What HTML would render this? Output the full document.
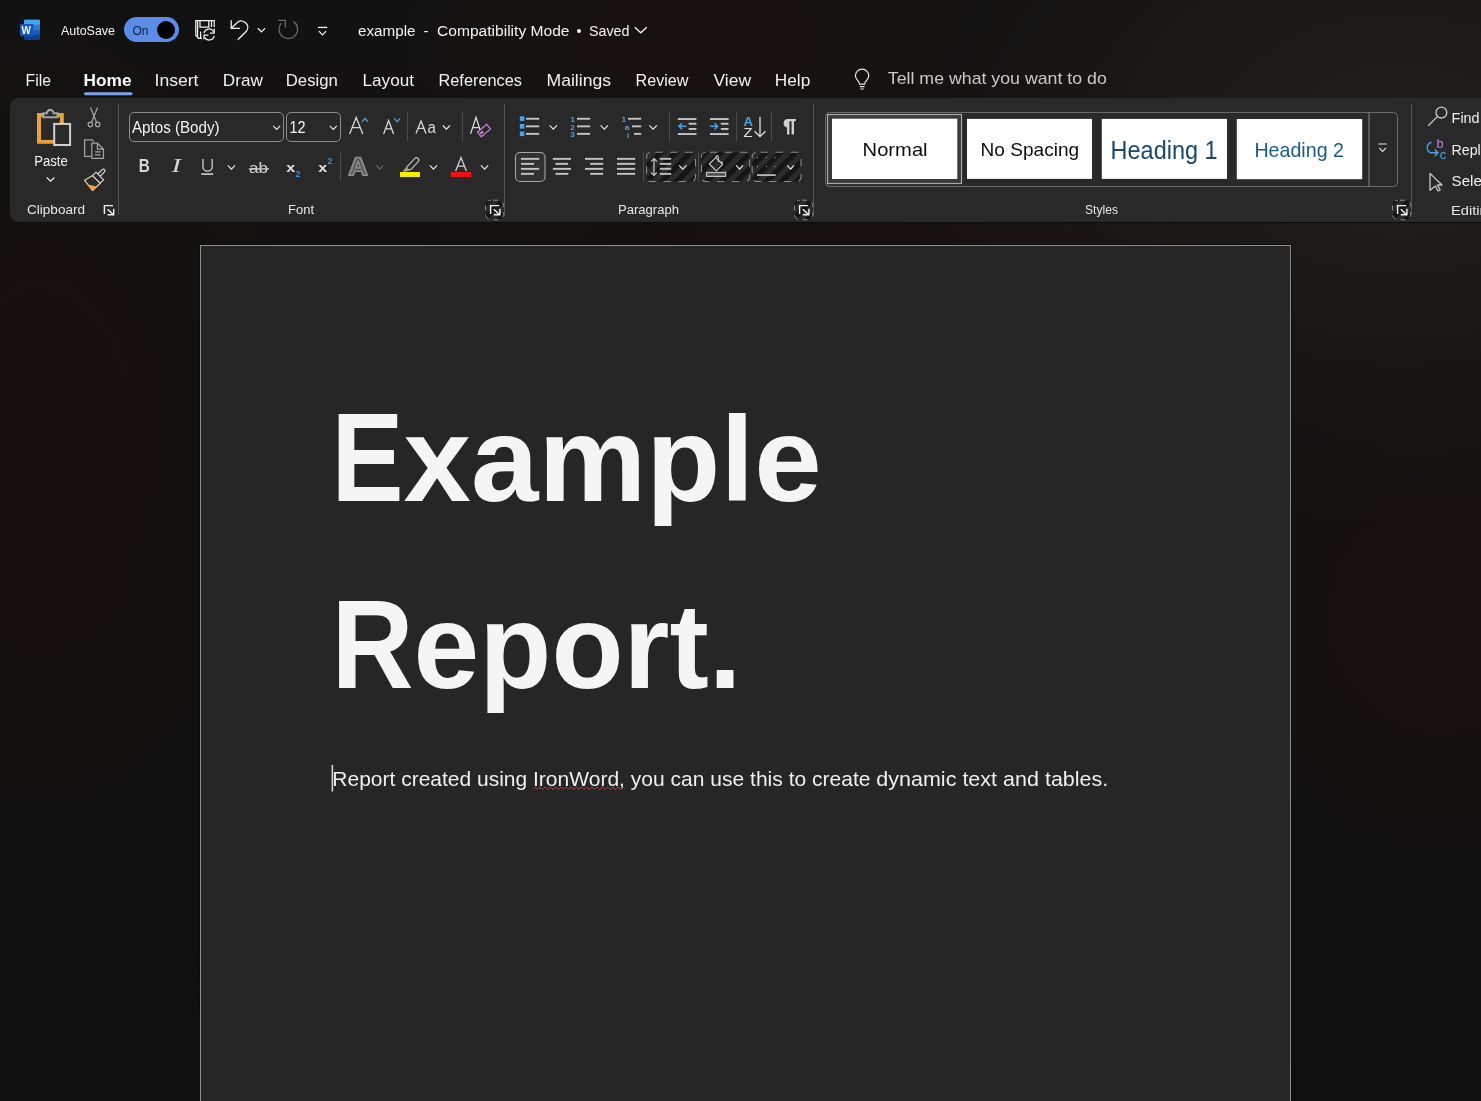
<!DOCTYPE html>
<html>
<head>
<meta charset="utf-8">
<style>
html,body{margin:0;padding:0;}
body{width:1481px;height:1101px;overflow:hidden;background:#131212;font-family:"Liberation Sans",sans-serif;position:relative;}
#bg{position:absolute;left:0;top:0;width:1481px;height:1101px;
 background:
  radial-gradient(ellipse 680px 480px at 1400px 150px, rgba(31,30,27,1), rgba(31,30,27,0) 78%),
  radial-gradient(ellipse 600px 80px at 900px 235px, rgba(26,16,16,0.8), rgba(26,16,16,0) 80%),
  radial-gradient(ellipse 380px 160px at 700px 40px, rgba(28,17,17,0.7), rgba(28,17,17,0) 80%),
  radial-gradient(ellipse 280px 300px at 1440px 630px, rgba(27,17,16,0.85), rgba(27,17,16,0) 80%),
  radial-gradient(ellipse 330px 520px at 40px 430px, rgba(25,15,15,0.85), rgba(25,15,15,0) 80%),
  linear-gradient(180deg,#131212 0%,#131111 50%,#0f0f0f 100%);}
svg{position:absolute;left:0;top:0;will-change:transform;}
text{font-family:"Liberation Sans",sans-serif;}
</style>
</head>
<body>
<div id="bg"></div>
<svg width="1481" height="1101" viewBox="0 0 1481 1101">
<!-- ===== TITLE BAR ===== -->
<g id="title">
  <!-- word icon -->
  <rect x="24" y="19.8" width="16" height="20.2" rx="1.4" fill="#103f91"/>
  <rect x="24" y="19.8" width="16" height="15.2" rx="1.4" fill="#185abd"/>
  <rect x="24" y="19.8" width="16" height="10.2" rx="1.4" fill="#2b7cd3"/>
  <rect x="24" y="19.8" width="16" height="4.9" rx="1.4" fill="#41a5ee"/>
  <rect x="20" y="24" width="13.3" height="12.2" rx="1.2" fill="#1a55b8"/>
  <text x="21.6" y="34" font-size="10" font-weight="700" fill="#f4f8ff" textLength="9.4" lengthAdjust="spacingAndGlyphs">W</text>

  <text x="61" y="35.4" font-size="13.2" fill="#f2f2f2" textLength="54" lengthAdjust="spacingAndGlyphs">AutoSave</text>
  <rect x="124" y="17" width="55" height="25" rx="12.5" fill="#5b8de8"/>
  <text x="132.5" y="35.2" font-size="12.5" fill="#0b1d3f" textLength="16" lengthAdjust="spacingAndGlyphs">On</text>
  <circle cx="166" cy="30" r="9" fill="#000"/>
  <!-- save icon -->
  <g fill="none" stroke="#f2f2f2" stroke-width="1.25" stroke-linejoin="miter">
    <path d="M202 38.3 H198.6 L195.8 35.5 V20.6 H214.2 V27"/>
    <path d="M197.6 21.2 V36.8"/>
    <path d="M200 20.6 V27.2 H208.8 V20.6"/>
    <path d="M211.5 20.6 V27"/>
    <path d="M200.6 31.6 V38"/>
    <path d="M204 33.2 A5.2 5.2 0 0 1 213.6 31.6"/>
    <path d="M214.2 28.5 V33 H209.8"/>
    <path d="M214.2 35.8 A5.2 5.2 0 0 1 204.6 37.4"/>
    <path d="M204 39.6 V35.2 H208.4"/>
  </g>
  <!-- undo -->
  <g fill="none" stroke="#f2f2f2" stroke-width="1.3">
    <path d="M231.2 20.2 V28.4 H240"/>
    <path d="M231.6 28 L237.6 22.2 A6.4 6.4 0 0 1 246.4 31.3 L237.8 39.8"/>
    <path d="M257.8 28.2 L261.5 31.8 L265.1 28.2" stroke-width="1.2"/>
  </g>
  <!-- redo (disabled) -->
  <g fill="none" stroke="#6b6b6b" stroke-width="1.3">
    <path d="M293.3 21.4 A9.3 9.3 0 1 1 281.3 23.2"/>
    <path d="M278.2 20.3 H285.3 V27.6"/>
  </g>
  <!-- customize qat -->
  <g fill="none" stroke="#f2f2f2" stroke-width="1.3">
    <path d="M317.9 27.4 H327.2"/>
    <path d="M318.9 31.2 L322.5 34.8 L326.1 31.2" stroke-width="1.2"/>
  </g>
  <!-- document title -->
  <text x="358" y="35.8" font-size="15.5" fill="#f2f2f2" textLength="57.5" lengthAdjust="spacingAndGlyphs">example</text>
  <text x="423.5" y="35.8" font-size="15.5" fill="#f2f2f2">-</text>
  <text x="437" y="35.8" font-size="15.5" fill="#f2f2f2" textLength="132.5" lengthAdjust="spacingAndGlyphs">Compatibility Mode</text>
  <circle cx="579" cy="31" r="2" fill="#f2f2f2"/>
  <text x="589" y="35.8" font-size="15.5" fill="#f2f2f2" textLength="40.5" lengthAdjust="spacingAndGlyphs">Saved</text>
  <path d="M634.8 27.2 L640.8 32.8 L646.8 27.2" fill="none" stroke="#f2f2f2" stroke-width="1.3"/>
</g>

<!-- ===== MENU TABS ===== -->
<g id="menu" font-size="16.2" fill="#f0f0f0">
  <text x="25.6" y="85.6" textLength="25.5" lengthAdjust="spacingAndGlyphs">File</text>
  <text x="83.6" y="85.6" font-weight="700" fill="#ffffff" textLength="48" lengthAdjust="spacingAndGlyphs">Home</text>
  <rect x="84" y="92.2" width="48.5" height="3" rx="1.5" fill="#7fa3e8"/>
  <text x="154.5" y="85.6" textLength="44" lengthAdjust="spacingAndGlyphs">Insert</text>
  <text x="222.8" y="85.6" textLength="40" lengthAdjust="spacingAndGlyphs">Draw</text>
  <text x="285.8" y="85.6" textLength="52" lengthAdjust="spacingAndGlyphs">Design</text>
  <text x="362.5" y="85.6" textLength="51.5" lengthAdjust="spacingAndGlyphs">Layout</text>
  <text x="438.5" y="85.6" textLength="83.5" lengthAdjust="spacingAndGlyphs">References</text>
  <text x="546.5" y="85.6" textLength="64.5" lengthAdjust="spacingAndGlyphs">Mailings</text>
  <text x="635.5" y="85.6" textLength="53" lengthAdjust="spacingAndGlyphs">Review</text>
  <text x="713.5" y="85.6" textLength="37.5" lengthAdjust="spacingAndGlyphs">View</text>
  <text x="774.8" y="85.6" textLength="35.5" lengthAdjust="spacingAndGlyphs">Help</text>
  <!-- lightbulb -->
  <g fill="none" stroke="#e8e8e8" stroke-width="1.2">
    <path d="M859.6 84.2 C859.6 81 855.4 79.5 855.4 75.8 A6.7 6.7 0 0 1 868.8 75.8 C868.8 79.5 864.6 81 864.6 84.2 Z"/>
    <path d="M859.8 86.6 H864.4 M860.4 89 H863.8"/>
  </g>
  <text x="887.8" y="84.4" font-size="17" fill="#c9c9c9" textLength="219" lengthAdjust="spacingAndGlyphs">Tell me what you want to do</text>
</g>



<!-- ===== DOCUMENT ===== -->
<g id="doc">
  <rect x="199.5" y="244.5" width="1092" height="900" fill="none" stroke="#0b0b0b" stroke-width="1"/>
  <rect x="200.5" y="245.5" width="1090" height="900" fill="#262626" stroke="#8f8f8f" stroke-width="1"/>
  <g font-weight="700" fill="#f5f5f5">
    <text x="331.4" y="501" font-size="126.8" textLength="72" lengthAdjust="spacingAndGlyphs">E</text>
    <text x="403.6" y="501" font-size="121" textLength="418" lengthAdjust="spacingAndGlyphs">xample</text>
      <text x="331.4" y="688.4" font-size="126.8" textLength="82" lengthAdjust="spacingAndGlyphs">R</text>
    <text x="413.6" y="688.4" font-size="121" textLength="328" lengthAdjust="spacingAndGlyphs">eport.</text>
  </g>
  <g font-size="19.3" fill="#efefef">
    <text x="332.3" y="785.8" textLength="194.9" lengthAdjust="spacingAndGlyphs">Report created using</text>
    <text x="533" y="785.8" textLength="337.5" lengthAdjust="spacingAndGlyphs">IronWord, you can use this to create</text>
    <text x="876.3" y="785.8" textLength="232" lengthAdjust="spacingAndGlyphs">dynamic text and tables.</text>
  </g>
  <rect x="331.6" y="765" width="1.5" height="26.6" fill="#dcdcdc"/>
  <path id="squig" d="M533.50 788.30 Q534.80 785.70 536.10 788.30 Q537.40 790.90 538.70 788.30 Q540.00 785.70 541.30 788.30 Q542.60 790.90 543.90 788.30 Q545.20 785.70 546.50 788.30 Q547.80 790.90 549.10 788.30 Q550.40 785.70 551.70 788.30 Q553.00 790.90 554.30 788.30 Q555.60 785.70 556.90 788.30 Q558.20 790.90 559.50 788.30 Q560.80 785.70 562.10 788.30 Q563.40 790.90 564.70 788.30 Q566.00 785.70 567.30 788.30 Q568.60 790.90 569.90 788.30 Q571.20 785.70 572.50 788.30 Q573.80 790.90 575.10 788.30 Q576.40 785.70 577.70 788.30 Q579.00 790.90 580.30 788.30 Q581.60 785.70 582.90 788.30 Q584.20 790.90 585.50 788.30 Q586.80 785.70 588.10 788.30 Q589.40 790.90 590.70 788.30 Q592.00 785.70 593.30 788.30 Q594.60 790.90 595.90 788.30 Q597.20 785.70 598.50 788.30 Q599.80 790.90 601.10 788.30 Q602.40 785.70 603.70 788.30 Q605.00 790.90 606.30 788.30 Q607.60 785.70 608.90 788.30 Q610.20 790.90 611.50 788.30 Q612.80 785.70 614.10 788.30 Q615.40 790.90 616.70 788.30 Q618.00 785.70 619.30 788.30 Q620.60 790.90 621.90 788.30 Q623.20 785.70 624.50 788.30" fill="none" stroke="#c9403e" stroke-width="1"/>
</g>
<!-- ===== RIBBON ===== -->
<g id="ribbon">
  <rect x="10" y="98.5" width="1520" height="124.5" rx="8" fill="#0d0c0c"/>
  <rect x="10" y="98" width="1520" height="124" rx="8" fill="#292929"/>
  <!-- separators -->
  <g fill="#555555">
    <rect x="118" y="104" width="1" height="111"/>
    <rect x="504" y="104" width="1" height="112"/>
    <rect x="813" y="104" width="1" height="112"/>
    <rect x="1411" y="104" width="1" height="111"/>
  </g>
  <!-- group labels -->
  <g font-size="12.6" fill="#e6e6e6">
    <text x="27" y="213.8" textLength="58" lengthAdjust="spacingAndGlyphs">Clipboard</text>
    <text x="288" y="214" textLength="26" lengthAdjust="spacingAndGlyphs">Font</text>
    <text x="618" y="213.8" textLength="61" lengthAdjust="spacingAndGlyphs">Paragraph</text>
    <text x="1085" y="214.3" textLength="33" lengthAdjust="spacingAndGlyphs">Styles</text>
    <text x="1451" y="215.2" textLength="45" lengthAdjust="spacingAndGlyphs">Editing</text>
  </g>
  <!-- dialog launchers -->
  <defs>
    <g id="lic" fill="none" stroke="#f2f2f2" stroke-width="1.4">
      <path d="M0.6 9 V0.6 H9.2"/>
      <path d="M3.8 4.2 L9.4 9.6 M3.8 9.8 H9.9 V3.8"/>
    </g>
    <g id="lring">
      <rect x="0.5" y="0.5" width="18.2" height="19.5" rx="5.5" fill="url(#hatch)" stroke="#8a8a8a" stroke-width="1" stroke-dasharray="5 5" stroke-dashoffset="-2"/>
    </g>
  </defs>
  <use href="#lic" x="103.8" y="205"/>
  <use href="#lring" x="485" y="199.7"/><use href="#lic" x="490" y="205"/>
  <use href="#lring" x="794" y="199.7"/><use href="#lic" x="799" y="205"/>
  <use href="#lring" x="1392" y="199.7"/><use href="#lic" x="1397" y="205"/>

  <!-- ===== Font ===== -->
  <g id="font">
    <rect x="129.5" y="112.5" width="154" height="29" rx="4.5" fill="none" stroke="#8c8c8c" stroke-width="1"/>
    <rect x="286.5" y="112.5" width="54" height="29" rx="4.5" fill="none" stroke="#8c8c8c" stroke-width="1"/>
    <text x="132" y="132.9" font-size="16.3" fill="#f2f2f2" textLength="87.5" lengthAdjust="spacingAndGlyphs">Aptos (Body)</text>
    <text x="289.6" y="132.9" font-size="16.3" fill="#f2f2f2" textLength="16" lengthAdjust="spacingAndGlyphs">12</text>
    <g fill="none" stroke="#e8e8e8" stroke-width="1.2">
      <path d="M273.2 125.8 L276.7 129.5 L280.2 125.8"/>
      <path d="M329.8 125.8 L333.3 129.5 L336.8 125.8"/>
    </g>
    <!-- grow / shrink -->
    <g fill="none" stroke="#d9d9d9" stroke-width="1.3">
      <path d="M349.6 133.9 L356.2 117.4 L362.8 133.9 M352.2 127.6 H360.2"/>
      <path d="M383.6 133.9 L388.6 120.6 L393.6 133.9 M385.6 128.8 H391.6"/>
      <path d="M416 133.4 L421 121 L426 133.4 M417.9 128.4 H424.1"/>
      <path d="M470.6 133.9 L476 117.4 L481.4 133.9 M472.7 127.6 H479.3"/>
    </g>
    <text x="427.4" y="133.4" font-size="16" fill="#d9d9d9" textLength="8.4" lengthAdjust="spacingAndGlyphs">a</text>
    <g fill="none" stroke="#4a9ee0" stroke-width="1.4">
      <path d="M362 121.8 L365 118.6 L368 121.8"/>
      <path d="M394.3 118.4 L397.2 121.6 L400.1 118.4"/>
    </g>
    <g fill="#4a4a4a"><rect x="407" y="112" width="1" height="29.5"/><rect x="462" y="112" width="1" height="29.5"/><rect x="340" y="152.3" width="1" height="29.2"/></g>
    <path d="M442.8 125.5 L446.4 129.2 L450 125.5" fill="none" stroke="#e8e8e8" stroke-width="1.2"/>
    <!-- eraser -->
    <g transform="translate(484 130.6) rotate(-40)">
      <rect x="-6" y="-3" width="12" height="6" fill="#292929" stroke="#c47ddb" stroke-width="1.3"/>
      <rect x="-4.6" y="-1.2" width="3.4" height="2.4" fill="#c47ddb"/>
    </g>
    <!-- row 2 -->
    <text x="138.8" y="172.1" font-size="17.5" font-weight="700" fill="#d6d6d6" textLength="11" lengthAdjust="spacingAndGlyphs">B</text>
    <text x="171.5" y="172.1" font-size="19" font-style="italic" font-family="Liberation Serif" fill="#d6d6d6" style="font-family:'Liberation Serif',serif" textLength="9.6" lengthAdjust="spacingAndGlyphs">I</text>
    <path d="M203 158.9 V166.5 A4.6 4.6 0 0 0 212.2 166.5 V158.9" fill="none" stroke="#d0d0d0" stroke-width="1.3"/>
    <rect x="201.3" y="173.2" width="11.9" height="1.8" fill="#bcbcbc"/>
    <path d="M227.8 165.4 L231.4 169.2 L235 165.4" fill="none" stroke="#e8e8e8" stroke-width="1.2"/>
    <text x="249" y="173.2" font-size="14" fill="#d0d0d0" textLength="19" lengthAdjust="spacingAndGlyphs">ab</text>
    <rect x="248.8" y="168.3" width="20.2" height="1.3" fill="#d0d0d0"/>
    <text x="286.2" y="172" font-size="12.5" font-weight="700" fill="#e0e0e0" textLength="9" lengthAdjust="spacingAndGlyphs">x</text>
    <text x="295.4" y="177" font-size="9" font-weight="700" fill="#3d8fd1" textLength="5" lengthAdjust="spacingAndGlyphs">2</text>
    <text x="318.3" y="172" font-size="12.5" font-weight="700" fill="#e0e0e0" textLength="9" lengthAdjust="spacingAndGlyphs">x</text>
    <text x="327.5" y="163.9" font-size="9" font-weight="700" fill="#3d8fd1" textLength="5" lengthAdjust="spacingAndGlyphs">2</text>
    <!-- text effects -->
    <path d="M348.4 175.5 L355.4 157.2 H360.8 L367.8 175.5 H362.6 L361.2 171.5 H355 L353.6 175.5 Z M356.4 167.2 H359.8 L358.1 162.2 Z" fill="#7c7c7c" fill-rule="evenodd" stroke="#9a9a9a" stroke-width="0.9" stroke-linejoin="round"/>
    <path d="M351.6 174.2 L357.2 159.2 H359 L364.6 174.2 M355.2 169.6 H361" fill="none" stroke="#3a3a3a" stroke-width="0.8"/>
    <path d="M376.3 165.4 L379.7 169.2 L383.1 165.4" fill="none" stroke="#6a6a6a" stroke-width="1.1"/>
    <!-- highlighter -->
    <path d="M404.6 171 L407.4 166.4 L414.6 158.6 A2.2 2.2 0 0 1 418.2 161.6 L411 169.4 Z" fill="none" stroke="#bdbdbd" stroke-width="1.3" stroke-linejoin="round"/>
    <path d="M402.2 171.4 L406.6 167.2 L409.6 170 Z" fill="#9a9a9a"/>
    <rect x="400" y="172" width="20" height="5" fill="#f6f000"/>
    <path d="M429.8 165.4 L433.4 169.2 L437 165.4" fill="none" stroke="#e8e8e8" stroke-width="1.2"/>
    <!-- font color -->
    <path d="M455.6 171 L461 157.4 L466.4 171 M457.6 166.2 H464.4" fill="none" stroke="#d0d0d0" stroke-width="1.3"/>
    <rect x="450.7" y="172" width="20.6" height="5" fill="#ee1111"/>
    <path d="M481 165.4 L484.6 169.2 L488.2 165.4" fill="none" stroke="#e8e8e8" stroke-width="1.2"/>
  </g>

  <!-- ===== Paragraph ===== -->
  <defs>
    <pattern id="hatch" patternUnits="userSpaceOnUse" width="10.6" height="10.6" patternTransform="rotate(45)">
      <rect width="10.6" height="10.6" fill="#2b2b2b"/>
      <rect width="5.3" height="10.6" fill="#151515"/>
    </pattern>
  </defs>
  <g id="paragraph">
    <!-- bullets -->
    <g fill="#4aa3e8">
      <rect x="519.8" y="116.3" width="4.6" height="4.6"/>
      <rect x="519.8" y="124" width="4.6" height="4.6"/>
      <rect x="519.8" y="131.5" width="4.6" height="4.6"/>
    </g>
    <g fill="#c4c4c4">
      <rect x="526" y="117.8" width="13.2" height="1.9"/>
      <rect x="526" y="125.4" width="13.2" height="1.9"/>
      <rect x="526" y="132.9" width="13.2" height="1.9"/>
      <rect x="577" y="117.8" width="13.2" height="1.9"/>
      <rect x="577" y="125.4" width="13.2" height="1.9"/>
      <rect x="577" y="132.9" width="13.2" height="1.9"/>
      <rect x="628" y="117.8" width="13.2" height="1.9"/>
      <rect x="632" y="125.4" width="9.2" height="1.9"/>
      <rect x="634" y="132.9" width="7.2" height="1.9"/>
    </g>
    <g font-size="7.5" font-weight="700" fill="#4aa3e8">
      <text x="570.6" y="122" textLength="4.2" lengthAdjust="spacingAndGlyphs">1</text>
      <text x="570.6" y="129.6" textLength="4.2" lengthAdjust="spacingAndGlyphs">2</text>
      <text x="570.6" y="137.2" textLength="4.2" lengthAdjust="spacingAndGlyphs">3</text>
      <text x="621.8" y="122" textLength="4.2" lengthAdjust="spacingAndGlyphs">1</text>
      <text x="624.8" y="129.6" textLength="4.6" lengthAdjust="spacingAndGlyphs">a</text>
      <text x="627" y="137.6" textLength="2.2" lengthAdjust="spacingAndGlyphs">i</text>
    </g>
    <g fill="none" stroke="#e8e8e8" stroke-width="1.2">
      <path d="M549.6 125.4 L553.3 129.2 L557 125.4"/>
      <path d="M600.6 125.4 L604.3 129.2 L608 125.4"/>
      <path d="M649.4 125.4 L653.1 129.2 L656.8 125.4"/>
    </g>
    <g fill="#4a4a4a">
      <rect x="669" y="112" width="1" height="29.7"/>
      <rect x="736" y="112" width="1" height="29.7"/>
      <rect x="771" y="112" width="1" height="29.7"/>
      <rect x="643" y="152" width="1" height="29.8"/>
      <rect x="698" y="152" width="1" height="29.8"/>
    </g>
    <!-- indents -->
    <g fill="#c4c4c4">
      <rect x="677.8" y="118.1" width="18.6" height="1.9"/>
      <rect x="688.7" y="122.8" width="7.7" height="1.9"/>
      <rect x="688.7" y="128" width="7.7" height="1.9"/>
      <rect x="677.8" y="133.1" width="18.6" height="1.9"/>
      <rect x="710" y="118.1" width="18.6" height="1.9"/>
      <rect x="720.8" y="122.8" width="7.7" height="1.9"/>
      <rect x="720.8" y="128" width="7.7" height="1.9"/>
      <rect x="710" y="133.1" width="18.6" height="1.9"/>
    </g>
    <g fill="none" stroke="#4aa3e8" stroke-width="1.5">
      <path d="M679 126.3 H686.4 M682 123.3 L679 126.3 L682 129.3"/>
      <path d="M710.2 126.3 H717.6 M714.6 123.3 L717.6 126.3 L714.6 129.3"/>
    </g>
    <!-- sort -->
    <text x="743.4" y="125.8" font-size="12" font-weight="700" fill="#4aa3e8" textLength="9.6" lengthAdjust="spacingAndGlyphs">A</text>
    <text x="743.6" y="137.2" font-size="12" fill="#e0e0e0" textLength="9" lengthAdjust="spacingAndGlyphs">Z</text>
    <path d="M760 116.8 V136.6 M754.6 131.2 L760 136.6 L765.4 131.2" fill="none" stroke="#e0e0e0" stroke-width="1.3"/>
    <!-- pilcrow -->
    <path d="M787 134.6 V127.4 A4.3 4.3 0 0 1 787 119 H795.8 V121.2 H794 V134.6 H791.6 V121.2 H789.4 V134.6 Z" fill="#d0d0d0"/>
    <!-- align buttons -->
    <rect x="515.5" y="152.5" width="29.5" height="29" rx="4.5" fill="#323232" stroke="#a6a6a6" stroke-width="1.1"/>
    <g fill="#c4c4c4">
      <rect x="521" y="157.9" width="18.2" height="1.9"/><rect x="521" y="162.9" width="13" height="1.9"/><rect x="521" y="167.9" width="18.2" height="1.9"/><rect x="521" y="172.9" width="13" height="1.9"/>
      <rect x="552.8" y="157.9" width="18.2" height="1.9"/><rect x="555.4" y="162.9" width="12.8" height="1.9"/><rect x="552.8" y="167.9" width="18.2" height="1.9"/><rect x="555.4" y="172.9" width="12.8" height="1.9"/>
      <rect x="585" y="157.9" width="18.2" height="1.9"/><rect x="590.2" y="162.9" width="13" height="1.9"/><rect x="585" y="167.9" width="18.2" height="1.9"/><rect x="590.2" y="172.9" width="13" height="1.9"/>
      <rect x="617" y="157.9" width="18.2" height="1.9"/><rect x="617" y="162.9" width="18.2" height="1.9"/><rect x="617" y="167.9" width="18.2" height="1.9"/><rect x="617" y="172.9" width="18.2" height="1.9"/>
    </g>
    <!-- hatched boxes -->
    <g stroke="#8a8a8a" stroke-width="1.1" stroke-dasharray="7.5 7.5">
      <rect x="646.6" y="152.3" width="48.9" height="29.2" rx="4.5" fill="url(#hatch)" stroke-dashoffset="-4"/>
      <rect x="701.4" y="152.3" width="48.3" height="29.2" rx="4.5" fill="url(#hatch)" stroke-dashoffset="-4"/>
      <rect x="752.2" y="152.3" width="48.8" height="29.2" rx="4.5" fill="url(#hatch)" stroke-dashoffset="-4"/>
    </g>
    <g fill="none" stroke="#e8e8e8" stroke-width="1.2">
      <path d="M679.2 165.4 L682.8 169.2 L686.4 165.4"/>
      <path d="M736.2 165.4 L739.6 169.2 L743 165.4"/>
      <path d="M787.2 165.4 L790.6 169.2 L794 165.4"/>
    </g>
    <!-- line spacing icon -->
    <g fill="#b8b8b8">
      <rect x="659.8" y="157.8" width="11.4" height="2"/><rect x="659.8" y="162.9" width="11.4" height="2"/><rect x="659.8" y="167.8" width="11.4" height="2"/><rect x="659.8" y="172.9" width="11.4" height="2"/>
    </g>
    <path d="M654 159 V175 M651.2 161.6 L654 158.6 L656.8 161.6 M651.2 172.4 L654 175.4 L656.8 172.4" fill="none" stroke="#b8b8b8" stroke-width="1.4"/>
    <!-- shading icon -->
    <path d="M709.4 164 L715.8 157.6 L722.6 164.4 L716.2 170.8 Z" fill="none" stroke="#c8c8c8" stroke-width="1.2"/>
    <path d="M715.8 157.6 V156.8 A1.4 1.4 0 0 1 718.4 156.8 V162" fill="none" stroke="#c8c8c8" stroke-width="1.1"/>
    <circle cx="721.6" cy="162.6" r="1.2" fill="#c8c8c8"/>
    <rect x="706.6" y="172.4" width="19" height="4" fill="#555" stroke="#c8c8c8" stroke-width="1.1"/>
    <!-- borders icon -->
    <g fill="#b0b0b0">
      <rect x="757" y="157.2" width="1" height="1"/><rect x="766" y="157.2" width="1" height="1"/><rect x="774.5" y="157.2" width="1" height="1"/>
      <rect x="757" y="165.8" width="1" height="1"/><rect x="766" y="165.8" width="1" height="1"/><rect x="774.5" y="165.8" width="1" height="1"/>
      <rect x="757" y="174.2" width="18.7" height="1.8" fill="#b8b8b8"/>
    </g>
  </g>

  <!-- ===== Styles ===== -->
  <g id="styles">
    <path d="M1397.5 116.5 V182.5 A4 4 0 0 1 1393.5 186.5 H829.5 A4 4 0 0 1 825.5 182.5 V116.5 A4 4 0 0 1 829.5 112.5 H1393.5 A4 4 0 0 1 1397.5 116.5 Z" fill="#292929" stroke="#6a6a6a" stroke-width="1"/>
    <rect x="1368.5" y="112.5" width="1" height="74" fill="#8a8a8a"/>
    <path d="M1378.4 144 H1386.8 M1379.2 147.8 L1382.6 151.4 L1386 147.8" fill="none" stroke="#e0e0e0" stroke-width="1.2"/>
    <rect x="827.5" y="114.5" width="134" height="69" fill="#3a3a3a" stroke="#a9a9a9" stroke-width="1.2"/>
    <rect x="832" y="118.7" width="125.3" height="60.3" fill="#ffffff"/>
    <rect x="967" y="118.9" width="125" height="60" fill="#ffffff"/>
    <rect x="1101.8" y="118.9" width="125.2" height="60" fill="#ffffff"/>
    <rect x="1236.8" y="119" width="125.4" height="60.2" fill="#ffffff"/>
    <text x="862.6" y="155.6" font-size="18.2" fill="#0d0d0d" textLength="65" lengthAdjust="spacingAndGlyphs">Normal</text>
    <text x="980.6" y="155.8" font-size="19" fill="#0d0d0d" textLength="98.5" lengthAdjust="spacingAndGlyphs">No Spacing</text>
    <text x="1110.6" y="158.6" font-size="25" fill="#17486f" textLength="107" lengthAdjust="spacingAndGlyphs">Heading 1</text>
    <text x="1254.4" y="156.8" font-size="21" fill="#1d5a87" textLength="89.6" lengthAdjust="spacingAndGlyphs">Heading 2</text>
  </g>
  <!-- ===== Editing ===== -->
  <g id="editing">
    <g fill="none" stroke="#c8c8c8" stroke-width="1.3">
      <circle cx="1441.4" cy="112.6" r="5.4"/>
      <path d="M1437.6 116.4 L1428.2 125.8"/>
      <path d="M1430 182.6 V173.4 L1442 185 H1437.6 L1440.2 190 L1438 191 L1435.4 186 L1430 190.2 Z" stroke-linejoin="round"/>
    </g>
    <text x="1451.6" y="122.9" font-size="14.8" fill="#f0f0f0" textLength="28" lengthAdjust="spacingAndGlyphs">Find</text>
    <text x="1451.6" y="154.6" font-size="14.8" fill="#f0f0f0" textLength="52" lengthAdjust="spacingAndGlyphs">Replace</text>
    <text x="1451.6" y="186.4" font-size="14.8" fill="#f0f0f0" textLength="42" lengthAdjust="spacingAndGlyphs">Select</text>
    <text x="1436.4" y="148.2" font-size="12.5" fill="#c97fe0" textLength="7" lengthAdjust="spacingAndGlyphs">b</text>
    <text x="1439.8" y="159.4" font-size="12.5" fill="#4aa3e8" textLength="6.4" lengthAdjust="spacingAndGlyphs">c</text>
    <path d="M1431.6 142.2 A5.6 5.6 0 0 0 1430.6 152.8 L1437.8 152.8 M1434.8 149.6 L1437.9 152.8 L1434.8 156" fill="none" stroke="#4aa3e8" stroke-width="1.4"/>
  </g>
  <!-- ===== Clipboard ===== -->
  <g id="clipboard">
    <!-- orange board -->
    <path d="M43 115 H39 V141.8 H61 V122.4 H61.8 V115 H58" fill="none" stroke="#e9a23b" stroke-width="4"/>
    <rect x="41" y="117" width="18.7" height="22.7" fill="#2b2a28"/>
    <!-- clip -->
    <path d="M43.4 113.3 H46.8 A3.4 3.4 0 0 1 53.6 113.3 H57.5 V117.3 H43.4 Z" fill="#2b2b2b" stroke="#a3a3a3" stroke-width="2.1"/>
    <!-- paper -->
    <rect x="54.2" y="123.9" width="15.9" height="21.1" fill="#2a2a2a" stroke="#d2d2d2" stroke-width="2"/>
    <text x="34.3" y="166" font-size="15.3" fill="#f2f2f2" textLength="33.5" lengthAdjust="spacingAndGlyphs">Paste</text>
    <path d="M46.8 177.5 L50.6 181.2 L54.4 177.5" fill="none" stroke="#f0f0f0" stroke-width="1.2"/>
    <!-- scissors -->
    <g fill="none" stroke="#a8a8a8" stroke-width="1.2">
      <path d="M90.5 107.4 L96.6 122.4 M97.6 107.4 L91.5 122.4"/>
      <circle cx="90.4" cy="124.4" r="2.2"/>
      <circle cx="97.7" cy="124.4" r="2.2"/>
    </g>
    <!-- copy -->
    <g fill="none" stroke="#a5a5a5" stroke-width="1.2">
      <path d="M91 156.3 H84.6 V139.8 H92.2 L94 141.6"/>
      <path d="M91.8 143.2 H97.4 L103.5 149.2 V158.3 H91.8 Z"/>
      <path d="M97.4 143.2 V149.2 H103.5"/>
      <path d="M95 151.8 H100.6 M95 154.8 H100.6"/>
    </g>
    <!-- format painter -->
    <g stroke-linejoin="round">
      <path d="M84.5 180.2 L92.6 175.6 L100.2 183.2 L92.6 190.6 Z" fill="none" stroke="#e8d199" stroke-width="1.2"/>
      <path d="M86.5 184 L96.5 186.5 L92.6 190.4 Z" fill="#e9a23b"/>
      <path d="M92.6 175.6 L96 172.2 L103.6 179.8 L100.2 183.2 Z" fill="#2a2a2a" stroke="#d8d8d8" stroke-width="1.2"/>
      <path d="M97.8 174 L102.2 169.6 A1.6 1.6 0 0 1 104.5 171.9 L100.1 176.3" fill="none" stroke="#d8d8d8" stroke-width="1.2"/>
    </g>
  </g>
</g>
</svg>
</body>
</html>
